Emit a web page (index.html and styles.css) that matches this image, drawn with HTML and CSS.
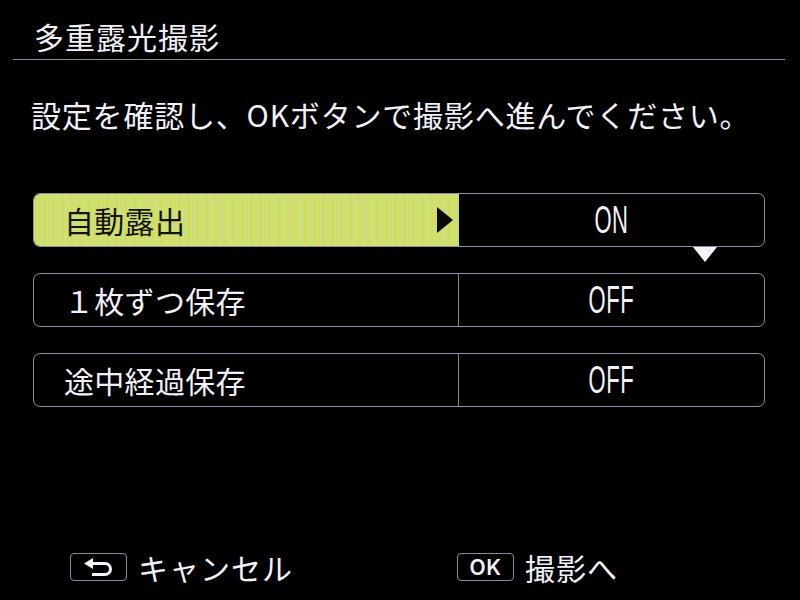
FILE: index.html
```html
<!DOCTYPE html>
<html lang="ja">
<head>
<meta charset="utf-8">
<link rel="stylesheet" href="styles.css">
</head>
<body>
<div class="screen">
  <header class="header"><h1 class="title">多重露光撮影</h1></header>
  <p class="intro">設定を確認し、OKボタンで撮影へ進んでください。</p>
  <div class="rows">
    <div class="row active">
      <div class="label"><span>自動露出</span>
        <svg class="arrow" width="16" height="26" viewBox="0 0 16 26"><polygon points="0,0 16,13 0,26" fill="#0a0a0a"/></svg>
      </div>
      <div class="value"><span class="cond">ON</span></div>
      <svg class="down" width="24" height="15" viewBox="0 0 24 15"><polygon points="0,0 24,0 12,15" fill="#f4f2fa"/></svg>
    </div>
    <div class="row">
      <div class="label"><span>１枚ずつ保存</span></div>
      <div class="value"><span class="cond">OFF</span></div>
    </div>
    <div class="row">
      <div class="label"><span>途中経過保存</span></div>
      <div class="value"><span class="cond">OFF</span></div>
    </div>
  </div>
  <footer class="footer">
    <div class="fgroup">
      <span class="key"><svg width="30" height="18" viewBox="0 0 30 18"><polygon points="0,5.5 9,0 9,11" fill="#f4f2fa"/><path d="M8 5.5 H21 A5.5 5.5 0 0 1 21 16.5 H8" fill="none" stroke="#f4f2fa" stroke-width="3"/></svg></span>
      <span class="ftext">キャンセル</span>
    </div>
    <div class="fgroup">
      <span class="key ok">OK</span>
      <span class="ftext">撮影へ</span>
    </div>
  </footer>
</div>
</body>
</html>
```
FILE: styles.css
```css
* { box-sizing: border-box; }
html, body { margin: 0; padding: 0; background: #000; }
body {
  width: 800px;
  height: 600px;
  overflow: hidden;
  font-family: "Noto Sans CJK JP", "Noto Sans", sans-serif;
  color: #f2f0f8;
}
.screen { display: flex; flex-direction: column; height: 600px; }
.header {
  margin: 0 15px 0 13px;
  padding: 21px 0 8px 21px;
  border-bottom: 1px solid #8e8a9c;
}
.title {
  margin: 0;
  font-size: 30px;
  line-height: 30px;
  font-weight: 400;
  letter-spacing: 1px;
}
.intro {
  margin: 39px 0 0 31px;
  font-size: 30px;
  line-height: 30px;
  letter-spacing: 0.8px;
}
.rows {
  margin: 64px 0 0 33px;
  width: 732px;
  display: flex;
  flex-direction: column;
  gap: 26px;
}
.row {
  position: relative;
  height: 54px;
  display: grid;
  grid-template-columns: 425px 1fr;
  border: 1.5px solid #928f9e;
  border-radius: 7px;
}
.label {
  display: flex;
  align-items: center;
  justify-content: space-between;
  padding: 0 6px 0 30px;
  font-size: 30px;
  line-height: 30px;
  letter-spacing: 0.3px;
  border-right: 1.5px solid #8a8794;
  border-radius: 6px 0 0 6px;
}
.active .label {
  color: #121208;
  border-right: none;
  background: repeating-linear-gradient(90deg, #d8dc52 0 3px, #cbe07e 3px 5px, #d2de62 5px 7px, #c6e092 7px 9px);
}
.value {
  display: flex;
  align-items: center;
  justify-content: center;
}
.cond {
  display: inline-block;
  font-family: "Liberation Sans", sans-serif;
  font-size: 38px;
  line-height: 38px;
  transform: scaleX(0.58);
  letter-spacing: 1px;
}
.down {
  position: absolute;
  left: 659px;
  top: 53px;
}
.footer {
  margin-top: auto;
  margin-bottom: 18px;
  padding-left: 70px;
  display: grid;
  grid-template-columns: 387px auto;
  align-items: center;
}
.fgroup { display: flex; align-items: center; gap: 11px; }
.key {
  width: 57px;
  height: 28px;
  border: 1.5px solid #8e8a9c;
  border-radius: 4px;
  display: flex;
  align-items: center;
  justify-content: center;
}
.ok {
  font-family: Inter, "Liberation Sans", sans-serif;
  font-weight: 600;
  font-size: 21px;
  letter-spacing: 0.5px;
}
.ftext { font-size: 30px; line-height: 30px; letter-spacing: 1px; }
```
